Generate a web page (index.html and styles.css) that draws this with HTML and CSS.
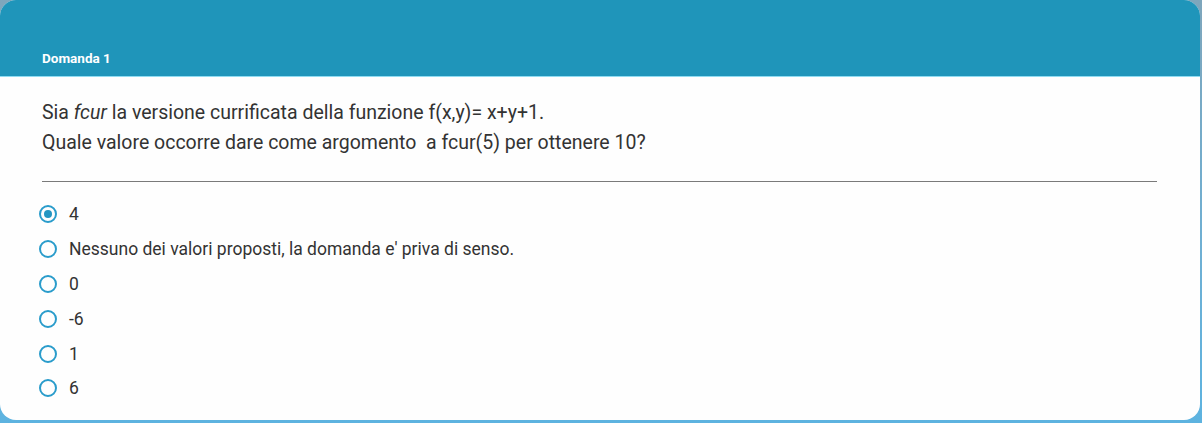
FILE: index.html
```html
<!DOCTYPE html>
<html lang="it">
<head>
<meta charset="utf-8">
<link rel="stylesheet" href="styles.css">
</head>
<body>
<div class="card">
  <div class="header"><span class="title">Domanda 1</span></div>
  <div class="content">
    <div class="question">
      <p>Sia <em>fcur</em> la versione currificata della funzione f(x,y)= x+y+1.</p>
      <p>Quale valore occorre dare come argomento&nbsp; a fcur(5) per ottenere 10?</p>
    </div>
    <hr class="sep">
    <ul class="options">
      <li><span class="radio checked"></span><span>4</span></li>
      <li><span class="radio"></span><span>Nessuno dei valori proposti, la domanda e' priva di senso.</span></li>
      <li><span class="radio"></span><span>0</span></li>
      <li><span class="radio"></span><span>-6</span></li>
      <li><span class="radio"></span><span>1</span></li>
      <li><span class="radio"></span><span>6</span></li>
    </ul>
  </div>
</div>
</body>
</html>
```
FILE: styles.css
```css
html, body { margin: 0; padding: 0; }
body {
  width: 1202px;
  height: 423px;
  overflow: hidden;
  background: linear-gradient(to bottom, #7ea6bc 0%, #6fb0d4 60%, #5db3e0 100%);
  font-family: Roboto, "Liberation Sans", sans-serif;
  color: #333;
}
.card {
  width: 1200px;
  height: 420px;
  background: #fefefe;
  border-radius: 16px;
  overflow: hidden;
}
.header {
  height: 77px;
  background: #1f95ba;
  border-bottom: 1px solid #8fdcf2;
  box-sizing: border-box;
  display: flex;
  align-items: flex-end;
  padding: 0 0 10px 42px;
}
.title {
  color: #fff;
  font-weight: 700;
  font-size: 13.5px;
  line-height: 16px;
}
.content {
  padding: 21px 43px 0 42px;
}
.question p {
  margin: 0;
  font-size: 19.5px;
  line-height: 30px;
  color: #333;
}
.sep {
  border: 0;
  border-top: 1px solid #7a7a7a;
  margin: 23px 0 0 0;
  height: 0;
}
.options {
  list-style: none;
  margin: 15px 0 0 0;
  padding: 0;
}
.options li {
  display: flex;
  align-items: center;
  height: 34.8px;
  font-size: 17.5px;
  color: #333;
}
.radio {
  width: 14px;
  height: 14px;
  border: 2px solid #2a9ccb;
  border-radius: 50%;
  margin: 0 12px 0 -3px;
  display: flex;
  align-items: center;
  justify-content: center;
  flex: none;
}
.radio.checked::after {
  content: "";
  width: 8px;
  height: 8px;
  border-radius: 50%;
  background: #2496c2;
}
```
